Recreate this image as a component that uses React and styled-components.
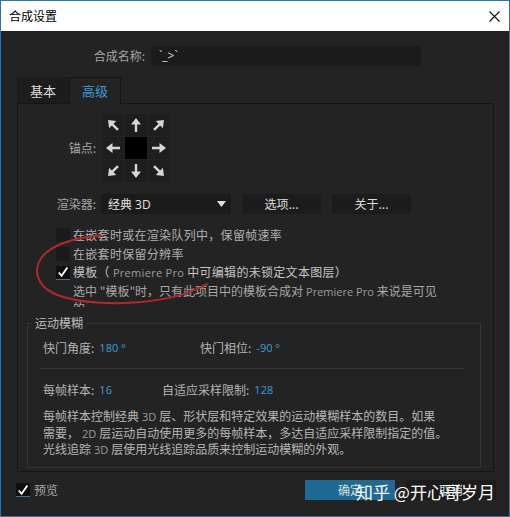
import React from "react"
import styled, { createGlobalStyle } from "styled-components"

const cjk = `"Noto Sans CJK SC", "Microsoft YaHei", sans-serif`
const latin = `"Open Sans", "Noto Sans", sans-serif`

const GlobalStyle = createGlobalStyle`
  html, body { margin: 0; padding: 0; background: #232323; }
  * { box-sizing: border-box; }
`

const Window = styled.div`
  position: relative;
  width: 510px;
  height: 517px;
  border: 1px solid #2676bd;
  background: #232323;
  display: flex;
  flex-direction: column;
  font-family: ${cjk};
  font-size: 12px;
  line-height: 16px;
  color: #b8b8b8;
  overflow: hidden;
`

const TitleBar = styled.div`
  height: 30px;
  flex: none;
  background: #fff;
  color: #000;
  display: flex;
  align-items: center;
  justify-content: space-between;
  padding: 0 9px 0 8px;
`

const Body = styled.div`
  display: flex;
  flex-direction: column;
  padding: 15px 15px 0 16px;
`

const NameRow = styled.div`
  display: flex;
  align-items: center;
  height: 20px;
  gap: 6px;
`

const NameLabel = styled.div`
  width: 128px;
  text-align: right;
  color: #a4a4a4;
`

const NameInput = styled.div`
  width: 270px;
  height: 20px;
  background: #1b1b1b;
  color: #dcdcdc;
  font-family: ${latin};
  font-size: 12px;
  line-height: 20px;
  padding-left: 8px;
`

const TabRow = styled.div`
  display: flex;
  margin-top: 11px;
  height: 26px;
`

const Tab = styled.div`
  width: 52px;
  height: ${p => (p.$active ? "27px" : "26px")};
  display: flex;
  align-items: center;
  justify-content: center;
  font-size: 13px;
  color: ${p => (p.$active ? "#3f9ad6" : "#dedede")};
  background: ${p => (p.$active ? "#232323" : "#1c1c1c")};
  border: 1px solid ${p => (p.$active ? "#151515" : "transparent")};
  border-bottom: none;
  position: relative;
  z-index: 1;
`

const Panel = styled.div`
  height: 369px;
  border: 1px solid #151515;
  padding-top: 10px;
  display: flex;
  flex-direction: column;
`

const FormRow = styled.div`
  display: grid;
  grid-template-columns: 78px auto;
  column-gap: 5px;
  align-items: center;
  margin-top: ${p => p.$mt || 0}px;
`

const Label = styled.div`
  text-align: right;
  color: #a6a6a6;
  font-size: 12px;
`

const AnchorGrid = styled.div`
  display: grid;
  grid-template-columns: repeat(3, 22px);
  grid-auto-rows: 22px;
  gap: 1px;
  margin-left: 1px;
  width: 68px;
`

const AnchorCell = styled.div`
  background: ${p => (p.$center ? "#000" : "#1e1e1e")};
  display: flex;
  align-items: center;
  justify-content: center;
`

const Controls = styled.div`
  display: flex;
  gap: 11px;
`

const Select = styled.div`
  width: 130px;
  height: 20px;
  background: #1b1b1b;
  display: flex;
  align-items: center;
  justify-content: space-between;
  padding: 0 5px 0 7px;
  color: #e2e2e2;
`

const Latin = styled.span`
  font-family: ${latin};
  font-size: ${p => p.$size || 11}px;
  color: ${p => p.$color || "inherit"};
  margin: 0 3px;
`

const Button = styled.div`
  width: ${p => p.$w || 79}px;
  height: 20px;
  background: ${p => (p.$primary ? "#1e6a93" : "#1c1c1c")};
  color: #dedede;
  display: flex;
  align-items: center;
  justify-content: center;
`

const CheckList = styled.div`
  margin-top: 11px;
  padding-left: 38px;
  display: flex;
  flex-direction: column;
`

const CheckRow = styled.div`
  display: flex;
  align-items: center;
  height: 19px;
  gap: 3px;
  letter-spacing: 0.3px;
  color: ${p => (p.$bright ? "#c4c4c4" : "#b0b0b0")};
`

const Box = styled.div`
  width: 14px;
  height: 14px;
  flex: none;
  background: ${p => (p.$checked ? "#0f0f0f" : "#1a1a1a")};
  border-bottom: ${p => (p.$checked ? "1px solid #4d6f8c" : "none")};
  display: flex;
  align-items: center;
  justify-content: center;
`

const Desc = styled.div`
  margin-top: 1px;
  padding-left: 17px;
  height: 24px;
  overflow: hidden;
  line-height: 16px;
  color: #a8a8a8;
`

const Group = styled.fieldset`
  margin: 8px 0 0 9px;
  padding: 0 0 0 15px;
  width: 454px;
  height: 153px;
  min-width: 0;
  border: 1px solid #353535;
`

const Legend = styled.legend`
  margin-left: -11px;
  padding: 0 3px;
  color: #bdbdbd;
  line-height: 16px;
`

const InfoRow = styled.div`
  display: flex;
  height: 16px;
  align-items: center;
  margin-top: ${p => p.$mt || 0}px;
`

const Cell = styled.div`
  width: ${p => (p.$w ? p.$w + "px" : "auto")};
  display: flex;
  align-items: center;
  gap: 5px;
  color: #b4b4b4;
`

const Value = styled.span`
  font-family: ${latin};
  font-size: 11px;
  color: #3f9bd8;
`

const Divider = styled.div`
  margin: 12px 0 0 -3px;
  width: 425px;
  height: 1px;
  background: #363636;
`

const Para = styled.div`
  margin-top: 10px;
  line-height: 15.5px;
  white-space: nowrap;
  color: #b6b6b6;
`

const Footer = styled.div`
  display: flex;
  align-items: center;
  height: 20px;
  margin-top: 8px;
  padding: 0 13px 0 15px;
`

const Preview = styled.div`
  display: flex;
  align-items: center;
  gap: 4px;
  color: #a8a8a8;
  flex: 1;
`

const ButtonGroup = styled.div`
  display: flex;
  gap: 11px;
`

const Watermark = styled.div`
  position: absolute;
  left: 355px;
  top: 480px;
  font-size: 17px;
  line-height: 22px;
  color: #fff;
  white-space: nowrap;
`

const Scribble = styled.svg`
  position: absolute;
  left: 0;
  top: 0;
  pointer-events: none;
`

const Arrow = ({ rot }) => (
  <svg width="16" height="16" viewBox="0 0 16 16" style={{ transform: `rotate(${rot}deg)` }}>
    <path d="M8 1 L3 7.5 L6.8 7.5 L6.8 15 L9.2 15 L9.2 7.5 L13 7.5 Z" fill="#d6d6d6" />
  </svg>
)

const Check = () => (
  <svg width="12" height="12" viewBox="0 0 12 12">
    <path d="M1.8 6.5 L4.6 9.8 L10.4 1.6" stroke="#fff" strokeWidth="1.8" fill="none" />
  </svg>
)

const anchors = [-45, 0, 45, -90, null, 90, -135, 180, 135]

export default function App() {
  return (
    <>
      <GlobalStyle />
      <Window>
        <TitleBar>
          <span>合成设置</span>
          <svg width="11" height="11" viewBox="0 0 11 11">
            <path d="M0.5 0.5 L10.5 10.5 M10.5 0.5 L0.5 10.5" stroke="#111" strokeWidth="1.1" />
          </svg>
        </TitleBar>
        <Body>
          <NameRow>
            <NameLabel>合成名称:</NameLabel>
            <NameInput>`_&gt;`</NameInput>
          </NameRow>
          <TabRow>
            <Tab>基本</Tab>
            <Tab $active>高级</Tab>
          </TabRow>
          <Panel>
            <FormRow>
              <Label>锚点:</Label>
              <AnchorGrid>
                {anchors.map((r, i) => (
                  <AnchorCell key={i} $center={r === null}>
                    {r !== null && <Arrow rot={r} />}
                  </AnchorCell>
                ))}
              </AnchorGrid>
            </FormRow>
            <FormRow $mt={12}>
              <Label>渲染器:</Label>
              <Controls>
                <Select>
                  <span>经典<Latin $size={12}>3D</Latin></span>
                  <svg width="9" height="6" viewBox="0 0 9 6">
                    <path d="M0 0 L9 0 L4.5 6 Z" fill="#e0e0e0" />
                  </svg>
                </Select>
                <Button>选项...</Button>
                <Button>关于...</Button>
              </Controls>
            </FormRow>
            <CheckList>
              <CheckRow>
                <Box />
                <span>在嵌套时或在渲染队列中，保留帧速率</span>
              </CheckRow>
              <CheckRow>
                <Box />
                <span>在嵌套时保留分辨率</span>
              </CheckRow>
              <CheckRow $bright>
                <Box $checked><Check /></Box>
                <span>模板（<Latin $color="#9c9c9c">Premiere Pro</Latin>中可编辑的未锁定文本图层）</span>
              </CheckRow>
              <Desc>
                选中 "模板"时，只有此项目中的模板合成对<Latin $color="#9c9c9c">Premiere Pro</Latin>来说是可见
                <br />
                的。
              </Desc>
            </CheckList>
            <Group>
              <Legend>运动模糊</Legend>
              <InfoRow $mt={9}>
                <Cell $w={157}>快门角度: <Value>180 °</Value></Cell>
                <Cell>快门相位: <Value>-90 °</Value></Cell>
              </InfoRow>
              <Divider />
              <InfoRow $mt={13}>
                <Cell $w={119}>每帧样本: <Value>16</Value></Cell>
                <Cell>自适应采样限制: <Value>128</Value></Cell>
              </InfoRow>
              <Para>
                每帧样本控制经典<Latin $color="#9c9c9c">3D</Latin>层、形状层和特定效果的运动模糊样本的数目。如果
                <br />
                需要，<Latin $color="#9c9c9c">2D</Latin>层运动自动使用更多的每帧样本，多达自适应采样限制指定的值。
                <br />
                光线追踪<Latin $color="#9c9c9c">3D</Latin>层使用光线追踪品质来控制运动模糊的外观。
              </Para>
            </Group>
          </Panel>
        </Body>
        <Footer>
          <Preview>
            <Box $checked><Check /></Box>
            <span>预览</span>
          </Preview>
          <ButtonGroup>
            <Button $w={90} $primary>确定</Button>
            <Button $w={90}>取消</Button>
          </ButtonGroup>
        </Footer>
        <Watermark>知乎 @开心哥岁月</Watermark>
        <Scribble width="510" height="517" viewBox="0 0 510 517">
          <path
            d="M102 235 C82 235 58 241 46 251 C30 264 32 287 62 296 C98 306 168 305 206 283"
            stroke="#b8262c"
            strokeWidth="2"
            fill="none"
            strokeLinecap="round"
          />
        </Scribble>
      </Window>
    </>
  )
}
